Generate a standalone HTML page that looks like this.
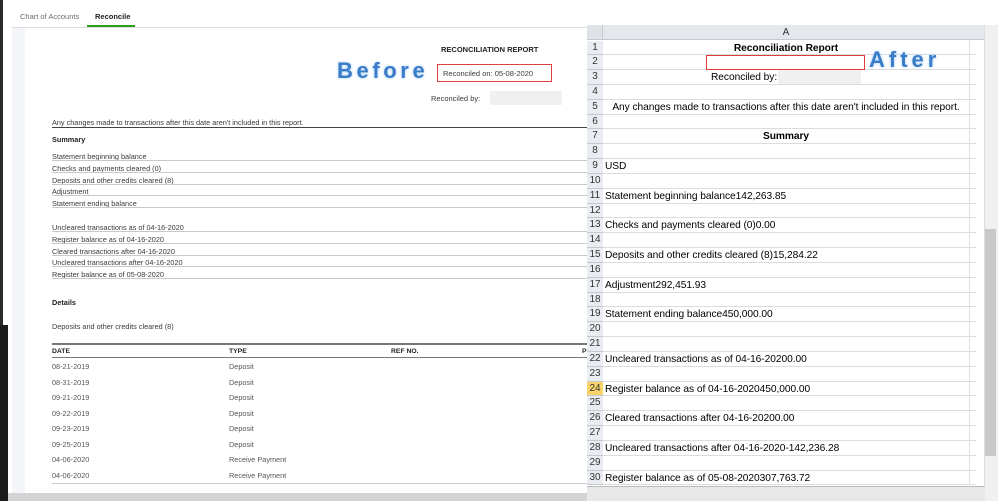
<!DOCTYPE html>
<html><head><meta charset="utf-8"><style>
*{margin:0;padding:0;box-sizing:border-box}
body{width:998px;height:501px;overflow:hidden;background:#fff;font-family:"Liberation Sans",sans-serif;position:relative;color:#393a3d}
.a{position:absolute;white-space:nowrap}
.l{font-size:7.3px;color:#393a3d}
.b{font-weight:bold;color:#222}
.dl{position:absolute;height:0;border-top:1px solid #c8c8c8}
.x{font-size:10.2px;color:#000;letter-spacing:-0.05px}
.rn{position:absolute;left:587px;width:16px;text-align:center;font-size:10px;color:#333;background:#e9edf2;border-bottom:1px solid #c5c9cf}
.rr{position:absolute;left:603px;width:373px;border-bottom:1px solid #dadcdd}
</style></head><body>
<div class="a" style="left:0;top:0;width:3px;height:325px;background:#2a2a2a"></div>
<div class="a" style="left:0;top:325px;width:8px;height:176px;background:#1a1a1a"></div>
<div class="a" style="left:20px;top:12px;font-size:7.5px;color:#6b6c72">Chart of Accounts</div>
<div class="a b" style="left:95px;top:12px;font-size:7.5px">Reconcile</div>
<div class="a" style="left:87px;top:25px;width:48px;height:2px;background:#2ca01c"></div>
<div class="a" style="left:12px;top:27px;width:576px;height:1px;background:#dcdcdc"></div>
<div class="a" style="left:12px;top:28px;width:13px;height:465px;background:#f4f5f8"></div>
<div class="a" style="left:8px;top:493px;width:590px;height:8px;background:#d4d4d4"></div>

<div class="a b" style="left:441px;top:45px;font-size:7.5px">RECONCILIATION REPORT</div>
<div class="a" style="left:337px;top:58px;font-size:22px;color:#3a7cc8;letter-spacing:3.6px;font-weight:bold;text-shadow:0 0 3px #a9d0f5">Before</div>
<div class="a" style="left:437px;top:64px;width:115px;height:18px;border:1px solid #e04040"></div>
<div class="a l" style="left:443px;top:69px;font-size:7.5px">Reconciled on: 05-08-2020</div>
<div class="a l" style="left:431px;top:94px;font-size:7.5px">Reconciled by:</div>
<div class="a" style="left:490px;top:91px;width:72px;height:14px;background:#f0f0f0"></div>
<div class="a l" style="left:52px;top:118px">Any changes made to transactions after this date aren't included in this report.</div>
<div class="a" style="left:52px;top:127px;width:536px;height:1px;background:#444"></div>
<div class="a l b" style="left:52px;top:135px">Summary</div>
<div class="a l" style="left:52px;top:152px">Statement beginning balance</div><div class="dl" style="left:52px;width:536px;top:160px"></div>
<div class="a l" style="left:52px;top:164px">Checks and payments cleared (0)</div><div class="dl" style="left:52px;width:536px;top:172px"></div>
<div class="a l" style="left:52px;top:176px">Deposits and other credits cleared (8)</div><div class="dl" style="left:52px;width:536px;top:184px"></div>
<div class="a l" style="left:52px;top:187px">Adjustment</div><div class="dl" style="left:52px;width:536px;top:195px"></div>
<div class="a l" style="left:52px;top:199px">Statement ending balance</div><div class="dl" style="left:52px;width:536px;top:207px"></div>
<div class="a l" style="left:52px;top:223px">Uncleared transactions as of 04-16-2020</div><div class="dl" style="left:52px;width:536px;top:231px"></div>
<div class="a l" style="left:52px;top:235px">Register balance as of 04-16-2020</div><div class="dl" style="left:52px;width:536px;top:243px"></div>
<div class="a l" style="left:52px;top:247px">Cleared transactions after 04-16-2020</div><div class="dl" style="left:52px;width:536px;top:255px"></div>
<div class="a l" style="left:52px;top:258px">Uncleared transactions after 04-16-2020</div><div class="dl" style="left:52px;width:536px;top:266px"></div>
<div class="a l" style="left:52px;top:270px">Register balance as of 05-08-2020</div><div class="dl" style="left:52px;width:536px;top:278px"></div>
<div class="a l b" style="left:52px;top:298px">Details</div>
<div class="a l" style="left:52px;top:322px">Deposits and other credits cleared (8)</div>
<div class="a" style="left:52px;top:343px;width:536px;height:2px;background:#777"></div>
<div class="a l b" style="left:52px;top:348px;font-size:6.8px">DATE</div>
<div class="a l b" style="left:229px;top:348px;font-size:6.8px">TYPE</div>
<div class="a l b" style="left:391px;top:348px;font-size:6.8px">REF NO.</div>
<div class="a l b" style="left:582px;top:348px;font-size:6.8px">P</div>
<div class="a" style="left:52px;top:357px;width:536px;height:1px;background:#777"></div>
<div class="a l" style="left:52px;top:359px;line-height:15.5px;color:#555">08-21-2019<br>08-31-2019<br>09-21-2019<br>09-22-2019<br>09-23-2019<br>09-25-2019<br>04-06-2020<br>04-06-2020</div>
<div class="a l" style="left:229px;top:359px;line-height:15.5px;color:#555">Deposit<br>Deposit<br>Deposit<br>Deposit<br>Deposit<br>Deposit<br>Receive Payment<br>Receive Payment</div>
<div class="a" style="left:52px;top:483px;width:536px;height:1px;background:#ccc"></div>

<!-- Excel -->
<div class="a" style="left:587px;top:25px;width:398px;height:461px;background:#fff"></div>
<div class="a" style="left:587px;top:25px;width:16px;height:15px;background:#dfe3e8;border-right:1px solid #c5c9cf;border-bottom:1px solid #c5c9cf"></div>
<div class="a" style="left:603px;top:25px;width:366px;height:15px;background:#e4e8ed;border-bottom:1px solid #c5c9cf;text-align:center;font-size:10px;color:#333;line-height:15px">A</div>
<div class="a" style="left:969px;top:25px;width:16px;height:15px;background:#e4e8ed;border-bottom:1px solid #c5c9cf"></div>
<div class="a" style="left:969px;top:40px;width:1px;height:445px;background:#e0e0e0"></div>
<div class="a" style="left:984px;top:25px;width:14px;height:476px;background:#f0f0f0;border-left:1px solid #ddd"></div>
<div class="a" style="left:985px;top:229px;width:11px;height:227px;background:#c8c8c8"></div>
<div class="a" style="left:587px;top:486px;width:398px;height:15px;background:#e8e8e8;border-top:1px solid #bbb"></div>
<div id="grid"></div>
<div class="a" style="left:706px;top:55px;width:159px;height:15px;border:1px solid #e03a3a"></div>
<div class="a" style="left:869px;top:47px;font-size:22px;color:#3a7cc8;letter-spacing:4px;font-weight:bold;text-shadow:0 0 3px #a9d0f5">After</div>
<div class="a" style="left:778px;top:70px;width:83px;height:14px;background:#f0f0f0"></div>
<script>
var rows={1:['<b>Reconciliation Report</b>','c'],3:['Reconciled by:','r3'],5:["Any changes made to transactions after this date aren't included in this report.",'c'],7:['<b>Summary</b>','c'],9:['USD'],11:['Statement beginning balance142,263.85'],13:['Checks and payments cleared (0)0.00'],15:['Deposits and other credits cleared (8)15,284.22'],17:['Adjustment292,451.93'],19:['Statement ending balance450,000.00'],22:['Uncleared transactions as of 04-16-20200.00'],24:['Register balance as of 04-16-2020450,000.00'],26:['Cleared transactions after 04-16-20200.00'],28:['Uncleared transactions after 04-16-2020-142,236.28'],30:['Register balance as of 05-08-2020307,763.72']};
var h='';
for(var n=1;n<=30;n++){var t=40.5+(n-1)*14.83;
var bg=n==24?'background:#f8d36a;color:#333;':'';
h+='<div class="rn" style="top:'+t+'px;height:14.83px;line-height:14.8px;'+bg+'">'+n+'</div>';
h+='<div class="rr" style="top:'+t+'px;height:14.83px"></div>';
if(rows[n]){var r=rows[n],st;
if(r[1]=='c')st='left:603px;width:366px;text-align:center;';else if(r[1]=='r3')st='left:711px;';else st='left:605px;';
h+='<div class="a x" style="'+st+'top:'+(t+1)+'px;line-height:14px">'+r[0]+'</div>';}}
document.getElementById('grid').innerHTML=h;
</script>
</body></html>
